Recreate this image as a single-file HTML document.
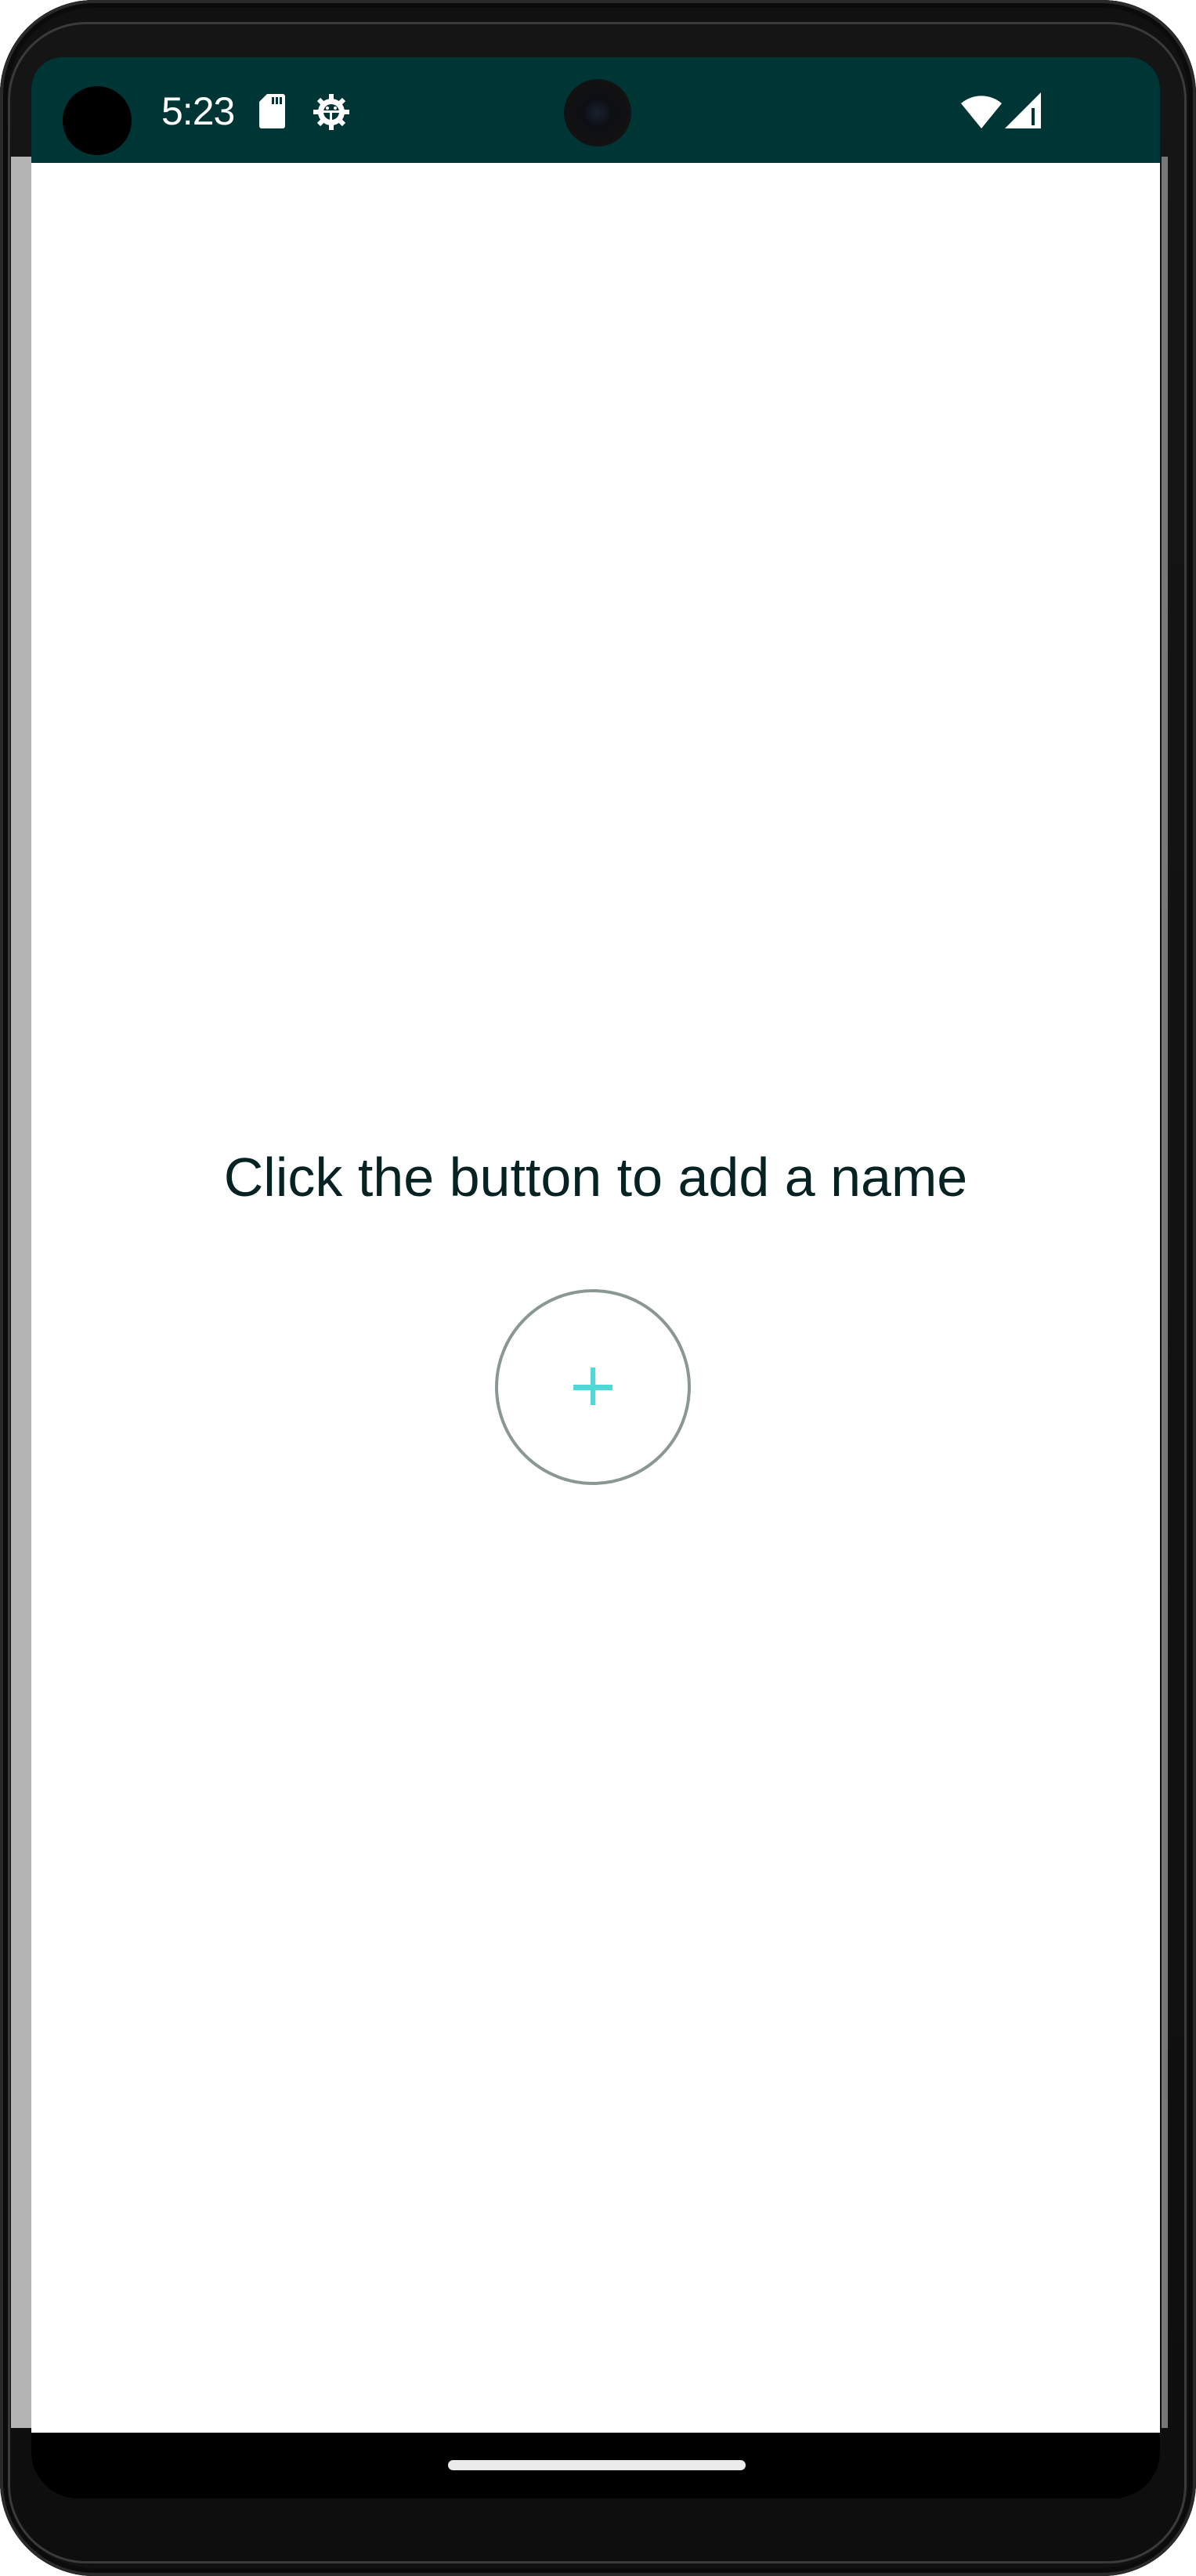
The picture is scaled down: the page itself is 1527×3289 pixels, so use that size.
<!DOCTYPE html>
<html><head><meta charset="utf-8"><style>
html,body{margin:0;padding:0;background:#fff;}
body{width:1527px;height:3289px;position:relative;overflow:hidden;font-family:"Liberation Sans",Roboto,sans-serif;}
.phone{position:absolute;left:0;top:0;width:1527px;height:3289px;border-radius:120px;background:#111;box-shadow:inset 0 0 0 4px #2a2a2a,inset 0 0 0 10px #0b0b0b;}
.rim{position:absolute;left:10px;top:28px;width:1505px;height:3245px;border-radius:100px;background:linear-gradient(#151515,#0e0e0e);box-shadow:inset 0 0 0 3px #3a3a3a;}
.lstrip{position:absolute;left:14px;top:200px;width:26px;height:2900px;background:#b4b4b4;}
.rstrip{position:absolute;right:36px;top:200px;width:8px;height:2900px;background:#777;}
.screen{position:absolute;left:40px;top:73px;width:1441px;height:3117px;border-radius:40px 40px 60px 60px;overflow:hidden;background:#000;}
.status{position:absolute;left:0;top:0;width:100%;height:135px;background:#003536;}
.content{position:absolute;left:0;top:135px;width:100%;height:2898px;background:#fff;}
.nav{position:absolute;left:0;top:3033px;width:100%;height:84px;background:#000;}
.pill{position:absolute;left:532px;top:35px;width:380px;height:13px;border-radius:7px;background:#ebebeb;}
.hole{position:absolute;left:40px;top:37px;width:88px;height:88px;border-radius:50%;background:#000;}
.cam{position:absolute;left:680px;top:28px;width:86px;height:86px;border-radius:50%;background:radial-gradient(circle at 50% 50%,#1a2230 0,#0c0f14 30%,#111 60%,#151515 100%);}
.time{position:absolute;left:166px;top:40px;color:#fff;font-size:50px;letter-spacing:-1px;}
.msg{position:absolute;left:0;width:100%;text-align:center;color:#062222;font-size:70px;}
</style></head><body>
<div class="phone"></div>
<div class="rim"></div>
<div class="lstrip"></div>
<div class="rstrip"></div>
<div class="screen">
  <div class="status">
    <div class="hole"></div>
    <div class="time">5:23</div>
    <svg style="position:absolute;left:291px;top:47px" width="33" height="44" viewBox="0 0 33 44"><path d="M10 0H30a3 3 0 0 1 3 3V41a3 3 0 0 1-3 3H3a3 3 0 0 1-3-3V10Z" fill="#fff"/><rect x="16" y="4" width="3" height="9" fill="#003536"/><rect x="21" y="4" width="3" height="9" fill="#003536"/><rect x="26" y="4" width="3" height="9" fill="#003536"/></svg>
    <svg style="position:absolute;left:358px;top:45px" width="50" height="50" viewBox="0 0 50 50"><g fill="#fff"><circle cx="25" cy="25" r="17"/><g stroke="#fff" stroke-width="6"><line x1="25" y1="2" x2="25" y2="48"/><line x1="2" y1="25" x2="48" y2="25"/><line x1="9" y1="9" x2="41" y2="41"/><line x1="41" y1="9" x2="9" y2="41"/></g></g><circle cx="25" cy="25" r="10" fill="#003536"/><rect x="13" y="23" width="24" height="3" fill="#fff"/><rect x="23" y="25" width="3" height="12" fill="#fff"/><circle cx="20" cy="20" r="2" fill="#fff"/><circle cx="30" cy="20" r="2" fill="#fff"/></svg>
    <div class="cam"></div>
    <svg style="position:absolute;left:1187px;top:45px" width="52" height="46" viewBox="0 0 52 46"><path d="M0 14A40 40 0 0 1 52 14L26 46Z" fill="#fff"/></svg>
    <svg style="position:absolute;left:1243px;top:45px" width="46" height="46" viewBox="0 0 46 46"><path d="M46 0V46H0Z" fill="#fff"/><path d="M34 20V42H38V20Z" fill="#003536"/></svg>
  </div>
  <div class="content">
    <div class="msg" style="top:1255px">Click the button to add a name</div>
    <svg style="position:absolute;left:590px;top:1436px" width="254" height="254" viewBox="0 0 254 254"><circle cx="127" cy="127" r="123" fill="none" stroke="#8a9794" stroke-width="4"/><rect x="102" y="124" width="50" height="7" fill="#4fd9d6"/><rect x="124" y="102" width="6" height="48" fill="#4fd9d6"/></svg>
  </div>
  <div class="nav"><div class="pill"></div></div>
</div>
</body></html>
